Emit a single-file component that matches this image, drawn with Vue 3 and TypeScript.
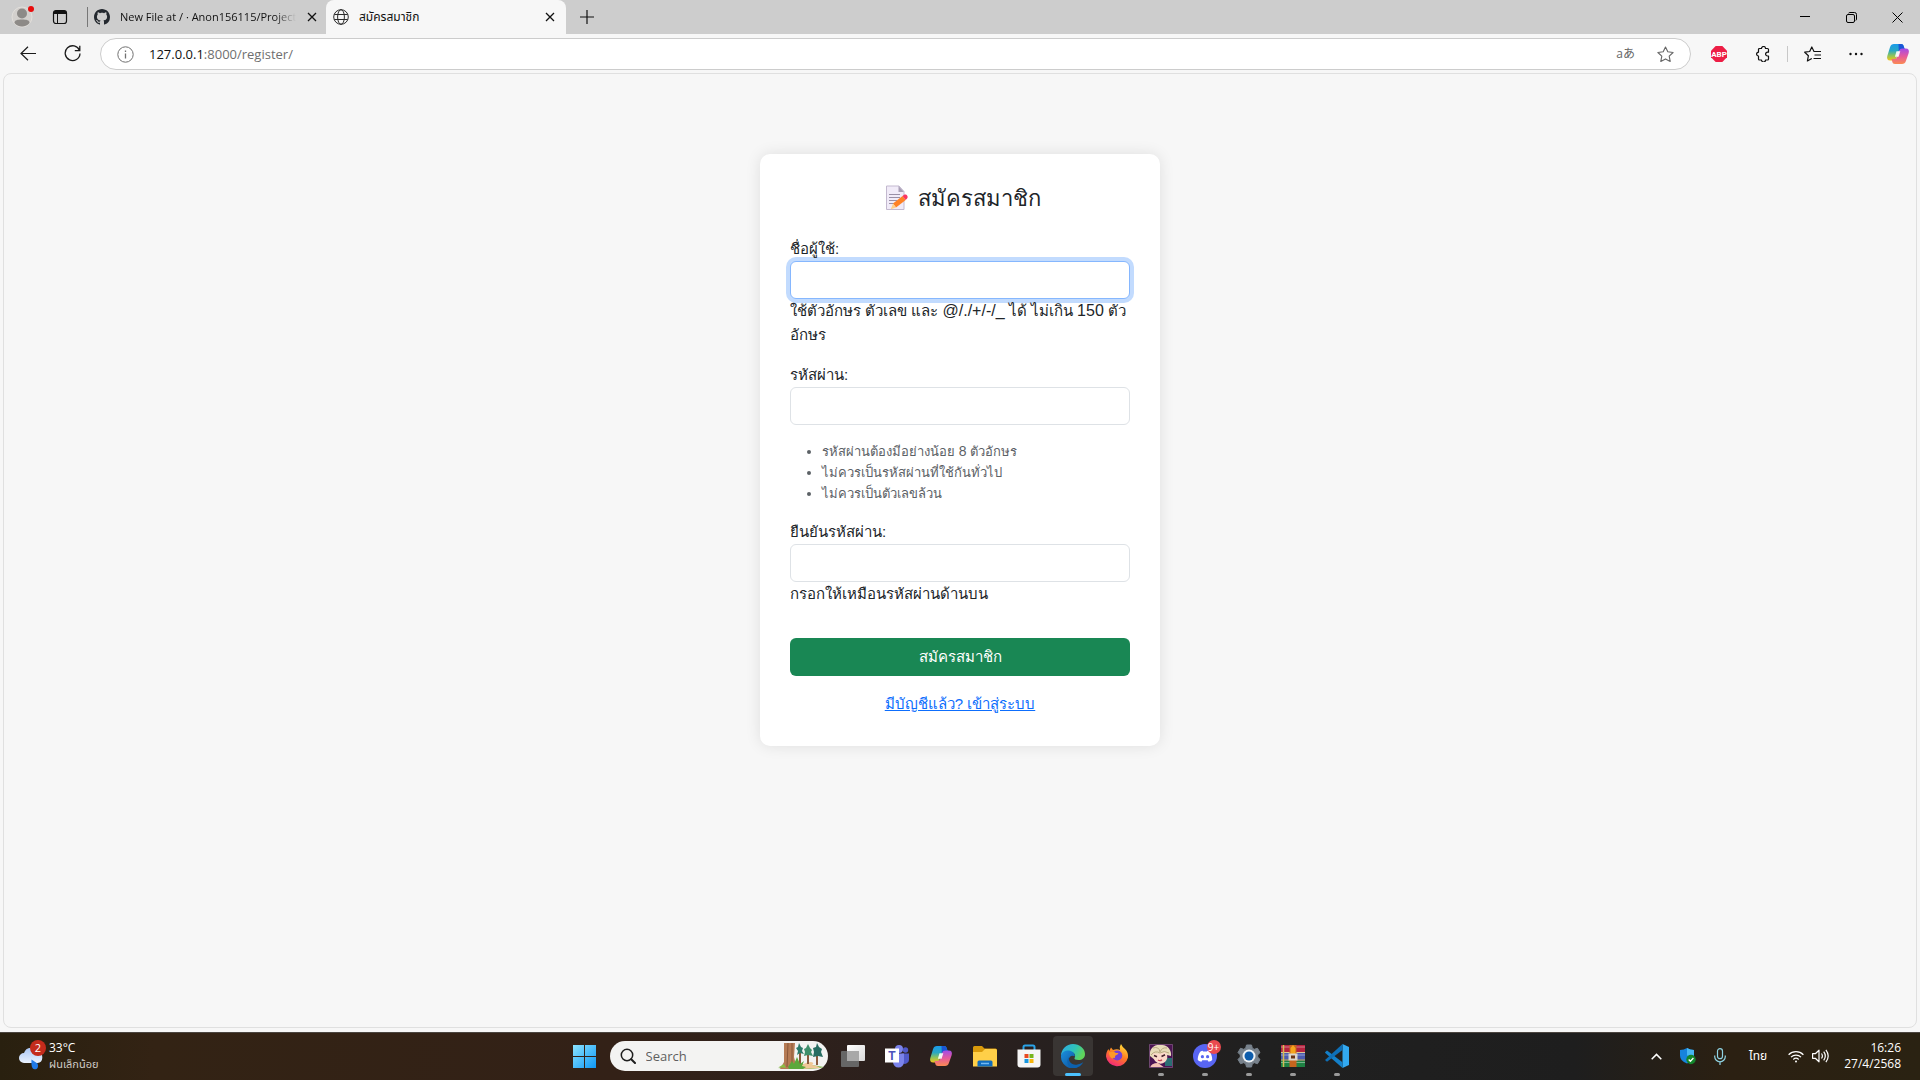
<script setup lang="ts">
import { onMounted, ref } from 'vue'

const username = ref('')
const password = ref('')
const confirmation = ref('')
const usernameField = ref<HTMLInputElement | null>(null)

const passwordRules = [
  { before: 'รหัสผ่านต้องมีอย่างน้อย ', latin: '8', after: ' ตัวอักษร' },
  { before: 'ไม่ควรเป็นรหัสผ่านที่ใช้กันทั่วไป', latin: '', after: '' },
  { before: 'ไม่ควรเป็นตัวเลขล้วน', latin: '', after: '' },
]

onMounted(() => usernameField.value?.focus({ preventScroll: true }))
</script>

<template>
  <div class="desktop">
    <svg class="defs" width="0" height="0" aria-hidden="true">
      <defs>
        <linearGradient id="copilotA" x1="0" y1="0" x2="0" y2="1">
          <stop offset="0" stop-color="#1b9bea" /><stop offset=".4" stop-color="#28a8c4" />
          <stop offset=".7" stop-color="#8fc45a" /><stop offset="1" stop-color="#f5c518" />
        </linearGradient>
        <linearGradient id="copilotB" x1="0" y1="0" x2="0" y2="1">
          <stop offset="0" stop-color="#a24be8" /><stop offset=".5" stop-color="#e65a9c" />
          <stop offset="1" stop-color="#fb8b52" />
        </linearGradient>
        <symbol id="copilot" viewBox="0 0 24 24">
          <path d="M8 2h7c1.600 0 2.300.8 2.700 2.200L19 8h-3.500c-1.800 0-2.700.8-3.200 2.500L10.500 16c-.6 1.900-1.500 2.600-3.200 2.600H4.200C1.500 18.600.6 16.500 1.300 14L4 5.200C4.700 3 6 2 8 2z" fill="url(#copilotA)" />
          <path d="M12.500 2H15c1.600 0 2.300.8 2.700 2.200L19 8h-3.500c-1.300 0-2.100.4-2.700 1.400z" fill="#1a56d6" />
          <path d="M16 22H9c-1.600 0-2.300-.8-2.700-2.200L5.500 17h2.600c1.800 0 2.700-.8 3.200-2.500L13.100 9c.6-1.900 1.500-2.600 3.200-2.600h3.500c2.700 0 3.600 2.100 2.900 4.600L20 18.800C19.300 21 18 22 16 22z" fill="url(#copilotB)" />
          <path d="M10.500 9.200h3.800l-1.700 5.600H8.900z" fill="#fff" opacity=".9" />
        </symbol>
      </defs>
    </svg>

    <header class="tabbar">
      <button class="tab-tool profile" aria-label="Profile">
        <svg width="24" height="24" viewBox="0 0 24 24">
          <circle cx="12" cy="13" r="10" fill="#d3d0cd" stroke="#e2dfdb" />
          <circle cx="12" cy="9.500" r="5" fill="#8d8a87" />
          <path d="M4.500 19c0-3 3-3.500 7.500-3.500s7.500.5 7.500 3.500c-1.700 2.200-4.300 3.500-7.500 3.500S6.200 21.200 4.500 19z" fill="#8d8a87" />
          <circle cx="21" cy="5" r="3" fill="#e80c0c" />
        </svg>
      </button>
      <button class="tab-tool" aria-label="Workspaces">
        <svg width="16" height="16" viewBox="0 0 16 16">
          <rect x="1.500" y="1.500" width="13" height="13" rx="2.500" fill="none" stroke="#111" stroke-width="1.200" />
          <path d="M1.500 5V4A2.500 2.500 0 0 1 4 1.500h8A2.500 2.500 0 0 1 14.500 4v1z" fill="#111" />
          <path d="M5.500 5v9.500" stroke="#111" />
        </svg>
      </button>
      <span class="tab-divider"></span>
      <div class="tab tab-back">
        <svg class="tab-icon" width="16" height="16" viewBox="0 0 16 16">
          <path fill="#24292f" d="M8 0C3.580 0 0 3.580 0 8c0 3.540 2.290 6.530 5.470 7.590.4.070.55-.17.55-.38 0-.19-.01-.82-.01-1.490-2.010.37-2.530-.49-2.690-.94-.09-.23-.48-.94-.82-1.130-.28-.15-.68-.52-.01-.53.63-.01 1.080.58 1.230.82.72 1.210 1.870.87 2.330.66.070-.52.28-.87.51-1.070-1.780-.2-3.640-.89-3.640-3.950 0-.87.31-1.590.82-2.150-.08-.2-.36-1.020.08-2.120 0 0 .67-.21 2.200.82.64-.18 1.320-.27 2-.27s1.360.09 2 .27c1.530-1.040 2.200-.82 2.200-.82.44 1.100.16 1.920.08 2.120.51.56.82 1.270.82 2.150 0 3.070-1.870 3.750-3.650 3.950.29.25.54.73.54 1.480 0 1.070-.01 1.930-.01 2.200 0 .21.15.46.55.38A8.010 8.010 0 0 0 16 8c0-4.420-3.580-8-8-8z" />
        </svg>
        <span class="tab-title fade">New File at / · Anon156115/Project</span>
        <button class="tab-close" aria-label="Close tab"><svg width="10" height="10" viewBox="0 0 10 10"><path d="M1 1l8 8M9 1L1 9" stroke="#111" stroke-width="1.300" /></svg></button>
      </div>
      <div class="tab tab-active">
        <svg class="tab-icon" width="16" height="16" viewBox="0 0 16 16" fill="none" stroke="#2b2b2b">
          <circle cx="8" cy="8" r="7.300" /><ellipse cx="8" cy="8" rx="3.400" ry="7.300" /><path d="M1.300 5.500h13.400M1.300 10.500h13.400" />
        </svg>
        <span class="tab-title">สมัครสมาชิก</span>
        <button class="tab-close" aria-label="Close tab"><svg width="10" height="10" viewBox="0 0 10 10"><path d="M1 1l8 8M9 1L1 9" stroke="#111" stroke-width="1.300" /></svg></button>
      </div>
      <button class="new-tab" aria-label="New tab"><svg width="14" height="14" viewBox="0 0 14 14"><path d="M7 0v14M0 7h14" stroke="#111" stroke-width="1.200" /></svg></button>
      <div class="window-controls">
        <button aria-label="Minimize"><svg width="10" height="10" viewBox="0 0 10 10"><path d="M0 4.500h10" stroke="#000" /></svg></button>
        <button aria-label="Restore"><svg width="11" height="11" viewBox="0 0 11 11" fill="none" stroke="#000"><rect x=".5" y="2.500" width="8" height="8" rx="1.500" /><path d="M2.500 1.200Q3 .5 4 .5h4.500a2 2 0 0 1 2 2V7q0 1-.7 1.500" /></svg></button>
        <button aria-label="Close"><svg width="11" height="11" viewBox="0 0 11 11"><path d="M.5.5l10 10M10.500.5l-10 10" stroke="#000" /></svg></button>
      </div>
    </header>

    <nav class="toolbar">
      <button class="tool" aria-label="Back"><svg width="16" height="16" viewBox="0 0 16 16" fill="none" stroke="#1b1b1b" stroke-width="1.200"><path d="M16 7.500H1M8 .8L1 7.500l7 6.700" /></svg></button>
      <button class="tool" aria-label="Refresh"><svg width="17" height="17" viewBox="0 0 17 17" fill="none" stroke="#1b1b1b" stroke-width="1.300"><path d="M15.500 5.500A7.400 7.400 0 1 0 16 8.500M15.800.8v4.900h-5" /></svg></button>
      <div class="address">
        <svg width="17" height="17" viewBox="0 0 17 17" fill="none" stroke="#717171"><circle cx="8.500" cy="8.500" r="7.700" /><path d="M8.500 7.500v5M8.500 4.400v1.500" stroke-width="1.300" /></svg>
        <span class="url"><span class="host">127.0.0.1</span>:8000/register/</span>
        <span class="translate">aあ</span>
        <button class="star" aria-label="Favorite"><svg width="17" height="17" viewBox="0 0 17 17" fill="none" stroke="#666" stroke-width="1.100" stroke-linejoin="round"><path d="M8.500 1l2.300 4.800 5.300.7-3.900 3.700 1 5.200-4.700-2.500-4.700 2.500 1-5.200L.9 6.500l5.300-.7z" /></svg></button>
      </div>
      <button class="tool" aria-label="Adblock Plus">
        <svg width="16" height="16" viewBox="0 0 16 16"><path d="M4.700 0h6.600L16 4.700v6.600L11.300 16H4.700L0 11.300V4.700z" fill="#ed1e45" /><text x="8" y="11" text-anchor="middle" class="abp">ABP</text></svg>
      </button>
      <button class="tool" aria-label="Extensions"><svg width="16" height="16" viewBox="0 0 16 16" fill="none" stroke="#111" stroke-width="1.200" stroke-linejoin="round"><path d="M4.500 2.500h2a2 2 0 1 1 4 0h2a1 1 0 0 1 1 1v2.700h-1a1.900 1.900 0 1 0 0 3.800h1v3a1 1 0 0 1-1 1h-2a2 2 0 1 1-4 0h-2a1 1 0 0 1-1-1V10a1.900 1.900 0 1 1 0-3.800V3.500a1 1 0 0 1 1-1z" /></svg></button>
      <span class="tool-divider"></span>
      <button class="tool" aria-label="Favorites"><svg width="17" height="16" viewBox="0 0 17 16" fill="none" stroke="#111" stroke-width="1.200" stroke-linejoin="round"><path d="M10 5.500L7.800 1 5.700 5.500l-5 .7 3.700 3.500-1 5.300L7.800 12.500M9.500 5.500H17M10.500 9H17M9.500 12.500H17" /></svg></button>
      <button class="tool" aria-label="Settings and more"><svg width="14" height="4" viewBox="0 0 14 4" fill="#111"><circle cx="1.500" cy="2" r="1.200" /><circle cx="7" cy="2" r="1.200" /><circle cx="12.500" cy="2" r="1.200" /></svg></button>
      <button class="tool" aria-label="Copilot"><svg width="24" height="24"><use href="#copilot" /></svg></button>
    </nav>

    <main class="page">
      <form class="card" autocomplete="off" @submit.prevent>
        <h1 class="heading">
          <svg width="33" height="29" viewBox="0 0 33 29" aria-hidden="true">
            <path d="M7.500 2h12.500l5 5.500V25.500H7.500z" fill="#f1ebf8" stroke="#c3b9cf" />
            <path d="M19.500 2v6H25z" fill="#a99fb5" />
            <path d="M10 10.500h11M10 13.500h11M10 16.500h8M10 19.500h5" stroke="#9a90a6" />
            <path d="M14 19.500L23.500 12l3.200 4L17 23.500z" fill="#ff8226" />
            <path d="M14 19.500l-2.200 5.700L17 23.500z" fill="#ffd08a" />
            <path d="M23.500 12l2-1.500c2-.7 4 1.700 2.700 3.800L26.700 16z" fill="#fb3560" />
          </svg>
          <span>สมัครสมาชิก</span>
        </h1>

        <div class="field">
          <label for="username">ชื่อผู้ใช้:</label>
          <input id="username" ref="usernameField" v-model="username" class="input focused" type="text" />
          <div class="help">ใช้ตัวอักษร ตัวเลข และ <span class="latin">@/./+/-/_</span> ได้ ไม่เกิน <span class="latin">150</span> ตัว<wbr />อักษร</div>
        </div>
        <div class="field">
          <label for="password">รหัสผ่าน:</label>
          <input id="password" v-model="password" class="input" type="password" />
          <ul class="rules">
            <li v-for="rule in passwordRules" :key="rule.before">{{ rule.before }}<span v-if="rule.latin" class="latin-small">{{ rule.latin }}</span>{{ rule.after }}</li>
          </ul>
        </div>
        <div class="field last">
          <label for="confirm">ยืนยันรหัสผ่าน:</label>
          <input id="confirm" v-model="confirmation" class="input" type="password" />
          <div class="help">กรอกให้เหมือนรหัสผ่านด้านบน</div>
        </div>
        <button class="submit" type="submit">สมัครสมาชิก</button>
        <p class="login"><a href="#login">มีบัญชีแล้ว? เข้าสู่ระบบ</a></p>
      </form>
    </main>

    <footer class="taskbar">
      <button class="weather">
        <svg width="28" height="32" viewBox="0 0 28 32">
          <defs><linearGradient id="cloud" x1="0" y1="0" x2="0" y2="1"><stop offset="0" stop-color="#a9c6f5" /><stop offset="1" stop-color="#e9f2ff" /></linearGradient></defs>
          <path d="M6 23a5 5 0 0 1 0-10 7.500 7.500 0 0 1 14-1 5.600 5.600 0 0 1-.5 11z" fill="url(#cloud)" />
          <path d="M13.500 19.500l6 4c1.500 4-.5 6-2.800 5.800-3-.4-3.500-4-3.200-9.800z" fill="#1f7ae8" />
          <circle cx="20" cy="8" r="8" fill="#c42b1c" />
          <text x="20" y="12" text-anchor="middle" class="badge-text">2</text>
        </svg>
        <span class="weather-text"><span>33°C</span><span class="weather-sub">ฝนเล็กน้อย</span></span>
      </button>

      <div class="apps">
        <button class="app" aria-label="Start">
          <svg width="24" height="24" viewBox="0 0 24 24">
            <defs><linearGradient id="win" x1="0" y1="0" x2="1" y2="1"><stop offset="0" stop-color="#8be3ff" /><stop offset="1" stop-color="#0e97f5" /></linearGradient></defs>
            <path d="M1 1h11v11H1zM13 1h11v11H13zM1 13h11v11H1zM13 13h11v11H13z" fill="url(#win)" />
          </svg>
        </button>
        <div class="search">
          <svg width="16" height="16" viewBox="0 0 16 16" fill="none" stroke="#1e1e1e" stroke-linecap="round"><circle cx="7" cy="7" r="5.700" stroke-width="1.500" /><path d="M11.200 11.200L15 15" stroke-width="2" /></svg>
          <input type="text" placeholder="Search" aria-label="Search" />
          <svg class="forest" width="46" height="26" viewBox="0 0 46 26">
            <path d="M0 25q8-4 20-4t26 3q-6 2-22 2T0 25z" fill="#8dbb5c" />
            <path d="M21 26q2-6 12-7 4 1 1 3 6 1 8 3z" fill="#efc896" />
            <path d="M22 7v15M30 5v16M39 9v13" stroke="#8b5a3c" stroke-width="2" />
            <path d="M21 0l2 4 2 1-1 3 2 3-4-1-3 2 1-4-2-3 2-1z" fill="#2c7a6a" />
            <path d="M30 1l2 4 2 2-1 2 2 4-5-1-4 1 1-4-1-3 2-1z" fill="#3e8f6b" />
            <path d="M39 0l2 4 3 2-1 3 2 5-5-1-5 1 1-5-1-4 3-1z" fill="#276d62" />
            <path d="M6 0h11l-1 14 3 12H2l4-7z" fill="#b57b55" />
            <path d="M10 0l-1 24M14 0v25" stroke="#8a583a" />
            <path d="M10 24l4-6 2 3 3-7 3 7 4-3-2 5 4 1-3 2H11z" fill="#5ba83c" />
            <path d="M1 24l5-3 2 4z" fill="#8abf45" />
          </svg>
        </div>
        <button class="app" aria-label="Task view">
          <svg width="24" height="24" viewBox="0 0 24 24">
            <defs><linearGradient id="tv" x1="0" y1="0" x2="1" y2="1"><stop offset="0" stop-color="#fff" /><stop offset="1" stop-color="#d9d9d9" /></linearGradient></defs>
            <rect x="6" y="1" width="18" height="16" rx="1" fill="url(#tv)" /><rect y="7" width="18" height="16" rx="1" fill="#666" /><rect x="6" y="7" width="12" height="10" fill="#a8a8a8" />
          </svg>
        </button>
        <button class="app" aria-label="Teams">
          <svg width="24" height="24" viewBox="0 0 24 24">
            <circle cx="14" cy="5" r="4" fill="#7b83eb" /><circle cx="20.500" cy="6" r="2.700" fill="#5059c9" />
            <path d="M17 9.500h7V16a4 4 0 0 1-7 2.500z" fill="#5059c9" /><path d="M8 9.500h11V18a5.500 5.500 0 0 1-11 0z" fill="#7b83eb" />
            <rect y="4.500" width="14" height="14" fill="#fff" /><text x="7" y="15.500" text-anchor="middle" class="teams-letter">T</text>
          </svg>
        </button>
        <button class="app" aria-label="Copilot"><svg width="24" height="24"><use href="#copilot" /></svg></button>
        <button class="app" aria-label="File Explorer">
          <svg width="24" height="24" viewBox="0 0 24 24">
            <path d="M0 3.500Q0 2 1.500 2H9l2.500 2.500H22.500Q24 4.500 24 6v4H0z" fill="#d99a0b" />
            <path d="M0 8h9l3-3h10.500Q24 5 24 6.500V22.500H0z" fill="#ffcf48" />
            <path d="M4.500 22.500V18q0-1.500 1.500-1.500h12q1.500 0 1.500 1.500v4.500z" fill="#0f6cbd" /><path d="M8 19.500h8" stroke="#74b9f0" stroke-width="1.500" />
          </svg>
        </button>
        <button class="app" aria-label="Microsoft Store">
          <svg width="24" height="24" viewBox="0 0 24 24">
            <path d="M6.500 6V3q0-1.500 1.500-1.500h8q1.500 0 1.500 1.500v3" fill="none" stroke="#2aa3e8" stroke-width="2" />
            <path d="M.5 5.500h23V20.500q0 3-3 3h-17q-3 0-3-3z" fill="#f5f5f5" />
            <path d="M7.500 10h4v4h-4z" fill="#e84a22" /><path d="M12.500 10h4v4h-4z" fill="#76b51b" /><path d="M7.500 15h4v4h-4z" fill="#1796e0" /><path d="M12.500 15h4v4h-4z" fill="#f7b50c" />
          </svg>
        </button>
        <button class="app active" aria-label="Microsoft Edge">
          <svg width="24" height="24" viewBox="0 0 24 24">
            <defs>
              <linearGradient id="edgeTop" x1="0" y1="0" x2="1" y2=".4"><stop offset="0" stop-color="#2da9e8" /><stop offset=".6" stop-color="#2fc3b8" /><stop offset="1" stop-color="#5fd45a" /></linearGradient>
              <linearGradient id="edgeLow" x1="0" y1="0" x2="1" y2="1"><stop offset="0" stop-color="#1b8fdd" /><stop offset="1" stop-color="#0c4f9a" /></linearGradient>
            </defs>
            <path d="M0 12C0 5.500 5.500 0 12 0s12 4.500 12 10c0 4-3 6-6.500 6-3 0-4.500-1-4-2 1.500-2 .5-6-4.500-6-4 0-8 1.500-9 4z" fill="url(#edgeTop)" />
            <path d="M0 12c.5-4 5-6 9-5.300 3 .6 5 2.800 4.800 5.500-3.500-1.600-6.300.6-6 4 .4 4 4 7.300 8.700 7.500A12 12 0 0 1 0 12z" fill="url(#edgeLow)" />
            <path d="M8.500 12.500c-2.200 5 3 9.500 8 8 2.500-.6 4.600-1.600 5.900-2.600-2 3.600-5.400 6.100-9.400 6.100C7 24 4 17 8.500 12.500z" fill="#0d61ae" />
          </svg>
        </button>
        <button class="app" aria-label="Firefox">
          <svg width="24" height="24" viewBox="0 0 24 24">
            <defs><linearGradient id="fox" x1=".8" y1="0" x2=".3" y2="1"><stop offset="0" stop-color="#ffe23a" /><stop offset=".5" stop-color="#ff7b22" /><stop offset="1" stop-color="#f2257e" /></linearGradient></defs>
            <path d="M1 12.500C1 9 2 7 3.500 5l.7 2L6 3.500 8 6q4-1.500 7 0-1-3 1-6 1 2.500 4 5 3.500 3.500 3 8.500A11.200 11.200 0 0 1 1 12.500z" fill="url(#fox)" />
            <circle cx="12.300" cy="11.500" r="5" fill="#7440d8" />
            <path d="M4 8.500q4-1.500 7 .5h2.500q-.5 2-3 2.400-1 1.300-.4 2.600-2.100-.7-2.300.5C5.500 14.500 4 11 4 8.500z" fill="#ff9a27" />
          </svg>
        </button>
        <button class="app running" aria-label="Game">
          <svg width="24" height="24" viewBox="0 0 24 24">
            <path d="M0 0h24v24H0z" fill="#4b1453" /><path d="M16 14h7v8h-7z" fill="#2b6e74" />
            <path d="M1 12C0 4 6 0 12 1c6-1 11 5 10 11l-4-1-3 2-9 3z" fill="#e7dcb9" />
            <path d="M4 9q5 2 13-1 3 6-1 10-5 4-10-1-2-3-2-8z" fill="#fbd9ca" />
            <path d="M4 4q6-2 7 4 2-5 7-4M2 11q4-5 9-2 4-3 9 0" fill="none" stroke="#b9a982" />
            <path d="M5 11.500l3 1.200M12.500 12.500l3.500-1.700" stroke="#46242c" stroke-width="1.600" />
            <path d="M9 16q2 1.500 4-.3" fill="none" stroke="#c44856" stroke-width="1.300" /><path d="M1 24q1-5 8-5l7 5z" fill="#f5c2b4" />
            <path d="M.5.5h23v23H.5z" fill="none" stroke="#6e4770" />
          </svg>
        </button>
        <button class="app running" aria-label="Discord">
          <svg width="24" height="24" viewBox="0 0 24 24">
            <circle cx="12" cy="12" r="12" fill="#5865f2" />
            <path d="M8 7.200l1.600-.5.500.9h3.800l.5-.9 1.600.5c2 1.200 3.400 5.600 3.200 8.800-1.200 1-2.500 1.500-3.600 1.700l-.9-1.400H9.300l-.9 1.400c-1.100-.2-2.400-.7-3.600-1.700C4.600 12.800 6 8.400 8 7.200z" fill="#fff" />
            <circle cx="9.400" cy="12.700" r="1.600" fill="#5865f2" /><circle cx="14.600" cy="12.700" r="1.600" fill="#5865f2" />
          </svg>
          <span class="count">9+</span>
        </button>
        <button class="app running" aria-label="Settings">
          <svg width="24" height="24" viewBox="0 0 24 24">
            <path d="M9.500 1h5l.8 3.200 2 1.100 3.200-1 2.500 4.300-2.300 2.300v2.200l2.300 2.300-2.500 4.300-3.200-1-2 1.100-.8 3.200h-5l-.8-3.200-2-1.100-3.200 1L1 15.400l2.300-2.300v-2.200L1 8.600l2.500-4.300 3.200 1 2-1.100z" fill="#78828c" stroke="#78828c" stroke-linejoin="round" />
            <circle cx="12" cy="12" r="6.500" fill="#eef2f5" /><circle cx="12" cy="12" r="4.500" fill="#0d5cab" />
          </svg>
        </button>
        <button class="app running" aria-label="WinRAR">
          <svg width="24" height="24" viewBox="0 0 24 24">
            <path d="M0 1h24v7H0z" fill="#b5233f" /><path d="M0 9h24v6.500H0z" fill="#4c5cae" /><path d="M0 16.500h24V23H0z" fill="#1f8244" />
            <path d="M0 3h24M0 11h24M0 18.500h24" stroke="#fff" stroke-opacity=".4" /><path d="M0 8.500h24M0 16h24" stroke="#ddc996" />
            <path d="M2.500 1v22" stroke="#d6ba52" stroke-width="1.500" /><path d="M8.500 1h7v22h-7z" fill="#c5651f" />
            <path d="M9.500 4l2.500-3 2.500 3v7h-5z" fill="#f5a51c" /><path d="M7.500 9.500h9v7h-9z" fill="#dcd7cc" /><path d="M10 11.500h4v3h-4z" fill="#6b3414" />
          </svg>
        </button>
        <button class="app running" aria-label="Visual Studio Code">
          <svg width="24" height="24" viewBox="0 0 24 24">
            <path d="M17.500 0L24 3v18l-6.500 3z" fill="#32a9f1" /><path d="M0 8.200l2-1.700 15.500 11.700V24L.3 9z" fill="#1480c9" /><path d="M17.500 0v6L2 17.700 0 16z" fill="#0e6fb6" />
          </svg>
        </button>
      </div>

      <div class="tray">
        <button class="tray-item" aria-label="Show hidden icons"><svg width="11" height="7" viewBox="0 0 11 7"><path d="M.7 6.200l4.800-4.800 4.800 4.800" fill="none" stroke="#fff" stroke-width="1.500" /></svg></button>
        <button class="tray-item" aria-label="Windows Security">
          <svg width="16" height="17" viewBox="0 0 16 17"><path d="M7 0q3 2 7 2v5.500Q14 13 7 15.500 0 13 0 7.500V2q4 0 7-2z" fill="#1683dc" /><path d="M7 0q3 2 7 2v5.500H7z" fill="#46b6f2" /><circle cx="11" cy="11.500" r="4.700" fill="#13862b" /><path d="M8.700 11.500l1.700 1.700 3-3.200" stroke="#fff" fill="none" stroke-width="1.300" /></svg>
        </button>
        <button class="tray-item" aria-label="Microphone"><svg width="12" height="17" viewBox="0 0 12 17" fill="none" stroke="#8fd3e3" stroke-width="1.200"><rect x="3.500" y=".7" width="5" height="10" rx="2.500" /><path d="M.7 7.500v1a5.300 5.300 0 0 0 10.600 0v-1M6 13.800V17" /></svg></button>
        <button class="tray-item language">ไทย</button>
        <button class="tray-item network" aria-label="Network and volume">
          <svg width="16" height="13" viewBox="0 0 16 13" fill="none" stroke="#fff" stroke-width="1.200"><path d="M.6 4.700a10.500 10.500 0 0 1 14.800 0M3 7.200a7 7 0 0 1 10 0M5.300 9.500a3.900 3.900 0 0 1 5.400 0" /><circle cx="8" cy="11.500" r="1" fill="#fff" stroke="none" /></svg>
          <svg width="17" height="14" viewBox="0 0 17 14" fill="none" stroke="#fff" stroke-width="1.200"><path d="M.6 4.700h2.700L7 1.200v11.600L3.300 9.300H.6zM9.500 4.500q1.800 2.500 0 5M11.700 2.700q3.200 4.300 0 8.600M13.900.8q4.600 6.200 0 12.400" stroke-linejoin="round" /></svg>
        </button>
        <button class="clock"><span>16:26</span><span>27/4/2568</span></button>
      </div>
    </footer>
  </div>
</template>

<style>
body { margin: 0; }
</style>

<style scoped>
.desktop {
  box-sizing: border-box;
  min-height: 100vh;
  display: flex;
  flex-direction: column;
  background: #f7f7f7;
  font-family: "Open Sans", "Noto Sans Thai", "Noto Sans CJK JP", sans-serif;
  color: #111;
}
.defs { position: absolute; }
button { border: 0; padding: 0; margin: 0; background: none; font: inherit; color: inherit; }
svg { display: block; flex: none; }

.tabbar { display: flex; height: 34px; background: #cdcdcd; padding-left: 6px; }
.tab-tool { width: 32px; margin-right: 6px; display: flex; align-items: center; justify-content: center; }
.profile { align-items: flex-start; padding-top: 4px; }
.tab-divider { width: 1px; height: 20px; background: #777; margin: 7px 0 0 5px; }
.tab { display: flex; align-items: center; padding: 0 10px 0 7px; box-sizing: border-box; font-size: 12px; }
.tab-back { width: 238px; padding: 0 8px 0 6px; background: #cdcdcd; font-size: 11px; }
.tab-active { width: 240px; background: #f7f7f7; border-radius: 8px 8px 0 0; }
.tab-title { flex: 1; min-width: 0; margin: 0 4px 0 10px; white-space: nowrap; overflow: hidden; line-height: 20px; }
.fade { margin-right: 10px; mask-image: linear-gradient(to right, #000 88%, transparent 100%); }
.tab-close { width: 12px; height: 20px; display: flex; align-items: center; justify-content: center; }
.new-tab { width: 42px; display: flex; align-items: center; justify-content: center; }
.window-controls { margin-left: auto; display: flex; }
.window-controls button { width: 46px; display: flex; align-items: center; justify-content: center; }

.toolbar { display: flex; align-items: center; height: 39px; padding: 0 2px 0 6px; }
.tool { width: 44px; height: 32px; display: flex; align-items: center; justify-content: center; }
.tool:last-child { width: 40px; }
.tool-divider { width: 1px; height: 16px; margin: 0 2px; background: #c8c8c8; }
.address {
  flex: 1;
  box-sizing: border-box;
  height: 32px;
  margin: 1px 6px 0;
  padding: 0 16px;
  display: flex;
  align-items: center;
  border: 1px solid #ccc;
  border-radius: 16px;
  background: #fff;
}
.url { flex: 1; margin-left: 15px; font-size: 13px; line-height: 16px; color: #6f6f6f; }
.host { color: #111; }
.translate { font-size: 12px; line-height: 16px; color: #666; margin-right: 22px; }
.abp { font: bold 8px Roboto, sans-serif; fill: #fff; }

.page {
  flex: 1;
  box-sizing: border-box;
  margin: 0 3px 4px;
  padding: 80px 16px;
  border: 1px solid #e0e0e0;
  border-radius: 8px;
  background: #f7f7f7;
  font-family: "Liberation Sans", sans-serif;
  font-size: 15px;
  line-height: 24px;
  color: #212529;
}
.card {
  box-sizing: border-box;
  max-width: 400px;
  margin: 0 auto;
  padding: 30px;
  background: #fff;
  border-radius: 10px;
  box-shadow: 0 0 15px rgba(0, 0, 0, .1);
}
.heading { display: flex; justify-content: center; align-items: center; gap: 6px; margin: 0 0 24px; font-size: 22px; line-height: 29px; font-weight: 400; }
.field { margin-bottom: 16px; }
.last { margin-bottom: 32px; }
.field label { display: block; }
.input {
  display: block;
  box-sizing: border-box;
  width: 100%;
  height: 38px;
  padding: 6px 12px;
  border: 1px solid #dee2e6;
  border-radius: 6px;
  background: #fff;
  font: inherit;
  color: inherit;
  outline: 0;
  caret-color: transparent;
}
.focused { border-color: #86b7fe; box-shadow: 0 0 0 4px #c2dbfe; }
.latin { font-size: 16px; }
.latin-small { font-size: 14px; }
.rules { margin: 16px 0; padding-left: 32px; font-size: 13px; line-height: 21px; color: #5c6166; }
.submit { display: block; width: 100%; height: 38px; border-radius: 6px; background: #198754; color: #fff; }
.login { margin: 16px 0 0; text-align: center; }
.login a { color: #0d6efd; text-decoration: underline; }

.taskbar {
  display: grid;
  grid-template-columns: 1fr auto 1fr;
  align-items: center;
  height: 48px;
  box-shadow: inset 0 1px 0 #4b4540;
  background: linear-gradient(to right, #29200f 0, #332314 8%, #332117 32%, #2b201e 48%, #202020 66%, #1e1e1e 82%, #2b2012 90%, #2a2212 100%);
  color: #fff;
  font-size: 12px;
  line-height: 16px;
}
.weather { display: flex; align-items: center; gap: 3px; padding-left: 18px; justify-self: start; text-align: left; }
.weather-text, .clock { display: flex; flex-direction: column; }
.weather-sub { font-size: 11px; color: #cfcac4; }
.badge-text { font-size: 11px; fill: #fff; }
.teams-letter { font: bold 12px "Liberation Sans", sans-serif; fill: #4b53bc; }
.apps { display: flex; align-items: center; }
.app { position: relative; width: 44px; height: 46px; display: flex; align-items: center; justify-content: center; }
.active { width: 40px; height: 40px; margin: 0 2px; border-radius: 4px; background: #393533; }
.active::after, .running::after { content: ""; position: absolute; bottom: 3px; left: 50%; width: 6px; height: 3px; margin-left: -3px; border-radius: 2px; background: #9a9a9a; }
.active::after { bottom: 0; width: 16px; margin-left: -8px; background: #4cc2ff; }
.count { position: absolute; top: 7px; right: 6px; width: 14px; height: 14px; border-radius: 7px; background: #ea4a4f; font-size: 10px; line-height: 14px; text-align: center; }
.search { display: flex; align-items: center; box-sizing: border-box; width: 218px; height: 30px; margin: 0 3px 0 4px; padding: 0 4px 0 10px; border-radius: 15px; background: #f3f3f2; }
.search input { flex: 1; min-width: 0; margin-left: 8px; padding: 0 2px; border: 0; background: none; outline: 0; font: inherit; font-size: 13px; }
.search input::placeholder { color: #5f5f5f; opacity: 1; }
.tray { justify-self: end; display: flex; align-items: center; padding-right: 19px; }
.tray-item { width: 32px; display: flex; justify-content: center; align-items: center; }
.language { width: 44px; }
.network { width: 56px; gap: 8px; }
.clock { text-align: right; margin-left: 8px; }
</style>
